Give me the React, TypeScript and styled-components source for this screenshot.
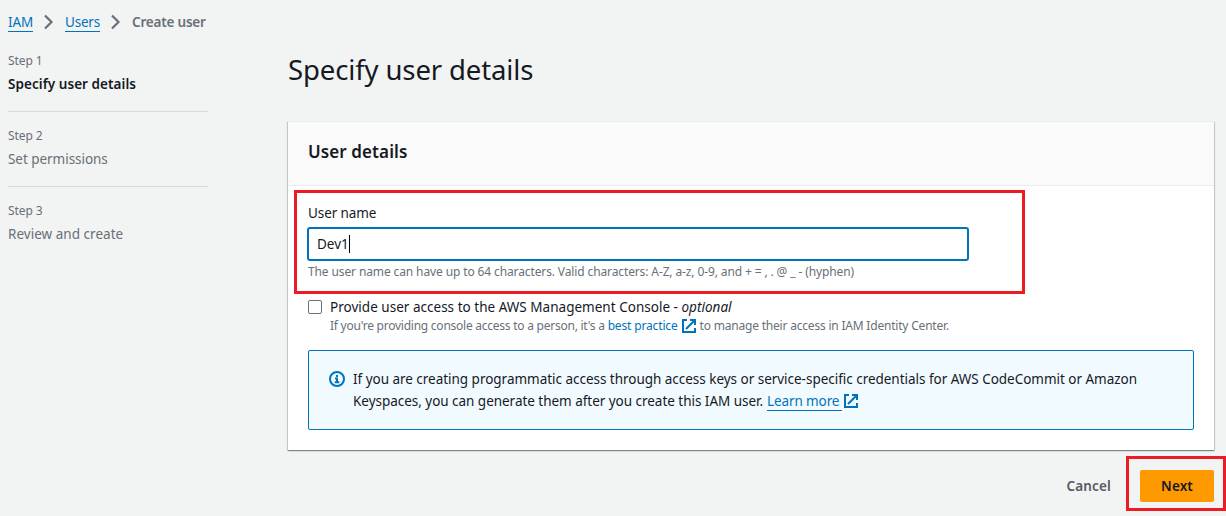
import React from "react";
import styled, { createGlobalStyle } from "styled-components";

const GlobalStyle = createGlobalStyle`
  * { box-sizing: border-box; }
  body {
    margin: 0;
    background: #f2f3f3;
    color: #16191f;
    font-family: "Noto Sans", "Open Sans", sans-serif;
    font-size: 14px;
    line-height: 22px;
  }
`;

const Page = styled.div`
  height: 516px;
  overflow: hidden;
  display: flex;
  flex-direction: column;
`;

const Text = styled.span<{ $track?: number }>`
  letter-spacing: ${(p) => p.$track ?? 0}px;
  white-space: nowrap;
`;

const Breadcrumbs = styled.nav`
  display: flex;
  align-items: center;
  height: 37px;
  padding: 7px 8px 0;
  font-size: 13.5px;
`;

const Crumb = styled.a<{ $width: number }>`
  display: block;
  width: ${(p) => p.$width}px;
  height: 20px;
  line-height: 20px;
  color: #0073bb;
  border-bottom: 1px solid #0073bb;
`;

const CurrentCrumb = styled.span`
  font-weight: 600;
  color: #687078;
  line-height: 20px;
`;

const Chevron = styled.svg`
  width: 10px;
  height: 16px;
  margin: 0 11px;
`;

const Body = styled.div`
  display: flex;
  flex: 1;
  padding: 0 12px 0 8px;
`;

const Steps = styled.ol`
  list-style: none;
  width: 200px;
  margin: 0 80px 0 0;
  padding: 0;
`;

const Step = styled.li`
  height: 75px;
  padding-top: 14px;
  border-bottom: 1px solid #d5dbdb;
  color: #687078;
  &:last-child { border-bottom: 0; }
`;

const StepLabel = styled.div`
  font-size: 12px;
  line-height: 20px;
`;

const StepTitle = styled.div<{ $active?: boolean }>`
  margin-top: 2px;
  font-size: 13.5px;
  color: ${(p) => (p.$active ? "#16191f" : "#687078")};
  font-weight: ${(p) => (p.$active ? 600 : 400)};
`;

const Main = styled.main`
  flex: 1;
  min-width: 0;
`;

const Title = styled.h1`
  margin: 0;
  height: 84px;
  padding-top: 15px;
  font-size: 27.5px;
  font-weight: 400;
  line-height: 36px;
`;

const Card = styled.section`
  height: 329px;
  background: #fff;
  border-top: 1px solid #eaeded;
  box-shadow: 0 1px 1px 0 rgba(0, 28, 36, 0.3), 1px 1px 1px 0 rgba(0, 28, 36, 0.15),
    -1px 1px 1px 0 rgba(0, 28, 36, 0.15);
`;

const CardHeader = styled.h2`
  margin: 0;
  height: 64px;
  padding: 19px 20px 0;
  font-size: 17px;
  font-weight: 600;
  line-height: 22px;
  background: #fafafa;
  border-bottom: 1px solid #eaeded;
`;

const CardBody = styled.div`
  padding: 16px 20px 0;
`;

const Field = styled.div`
  position: relative;
  height: 98px;
`;

const FieldLabel = styled.label`
  display: block;
  font-size: 13.5px;
`;

const Input = styled.div`
  display: flex;
  align-items: center;
  width: 662px;
  height: 34px;
  margin: 3px 0 0 -1px;
  padding: 0 8px;
  border: 2px solid #0073bb;
  border-radius: 3px;
  background: #fff;
  font-size: 13.5px;
`;

const Caret = styled.i`
  width: 1px;
  height: 18px;
  background: #000;
`;

const Hint = styled.div`
  padding-top: 1px;
  font-size: 12px;
  line-height: 20px;
  color: #687078;
  white-space: nowrap;
`;

const Highlight = styled.div<{ $inset: string }>`
  position: absolute;
  inset: ${(p) => p.$inset};
  border: 3px solid #ed1c24;
  pointer-events: none;
`;

const CheckRow = styled.div`
  display: flex;
  height: 50px;
`;

const Checkbox = styled.span`
  width: 14px;
  height: 14px;
  margin: 0 8px 0 0;
  border: 1px solid #687078;
  border-radius: 2px;
  background: #fff;
`;

const CheckText = styled.div`
  margin-top: -4px;
  font-size: 13.5px;
`;

const CheckHint = styled(Hint)`
  display: flex;
  margin-top: -3px;
  align-items: center;
`;

const HintLink = styled.a`
  display: flex;
  align-items: center;
  gap: 4px;
  margin: 0 4px 0 3px;
  color: #0073bb;
`;

const Alert = styled.div`
  display: flex;
  height: 80px;
  padding: 17px 20px;
  border: 1px solid #0073bb;
  border-radius: 2px;
  background: #f1faff;
  font-size: 13.5px;
`;

const AlertText = styled.div`
  margin-left: 8px;
`;

const AlertLine = styled.div`
  display: flex;
  height: 22px;
`;

const LearnMore = styled.a`
  width: 75px;
  height: 21px;
  margin: 0 2px 0 4px;
  border-bottom: 1px solid #0073bb;
  color: #0073bb;
`;

const Footer = styled.footer`
  display: flex;
  justify-content: flex-end;
  align-items: center;
  height: 32px;
  margin-top: 20px;
  font-size: 13.5px;
  font-weight: 600;
`;

const CancelButton = styled.a`
  color: #545b64;
  margin-right: 29px;
`;

const NextButton = styled.a`
  position: relative;
  display: flex;
  align-items: center;
  justify-content: center;
  width: 74px;
  height: 32px;
  border-radius: 2px;
  background: #ff9900;
`;

const Icon = styled.svg<{ $top?: number }>`
  display: block;
  flex: none;
  margin-top: ${(p) => p.$top ?? 0}px;
`;

const Separator = () => (
  <Chevron viewBox="0 0 10 16" fill="none" stroke="#687078" strokeWidth="2.2">
    <path d="M1 1.5 7.5 8 1 14.5" />
  </Chevron>
);

const ExternalIcon = ({ top }: { top?: number }) => (
  <Icon $top={top} width="14" height="14" viewBox="0 0 14 14" fill="none" stroke="#0073bb" strokeWidth="2">
    <path d="M5 1H1v12h12V9" />
    <path d="M8 1h5v5M13 1 4 10" />
  </Icon>
);

const InfoIcon = () => (
  <Icon $top={3} width="16" height="16" viewBox="0 0 16 16" fill="none" stroke="#0073bb" strokeWidth="2">
    <circle cx="8" cy="8" r="7" />
    <path d="M8 4v2M6 7.5h2V11M5.7 11.2h4.6" />
  </Icon>
);

const steps = [
  { label: "Step 1", title: "Specify user details", track: 0.06, active: true },
  { label: "Step 2", title: "Set permissions", track: -0.04 },
  { label: "Step 3", title: "Review and create", track: 0.03 },
];

export default function App() {
  return (
    <Page>
      <GlobalStyle />
      <Breadcrumbs>
        <Crumb $width={25}><Text $track={-0.1}>IAM</Text></Crumb>
        <Separator />
        <Crumb $width={35}><Text $track={-0.2}>Users</Text></Crumb>
        <Separator />
        <CurrentCrumb><Text $track={-0.2}>Create user</Text></CurrentCrumb>
      </Breadcrumbs>
      <Body>
        <Steps>
          {steps.map((s) => (
            <Step key={s.label}>
              <StepLabel><Text $track={-0.1}>{s.label}</Text></StepLabel>
              <StepTitle $active={s.active}><Text $track={s.track}>{s.title}</Text></StepTitle>
            </Step>
          ))}
        </Steps>
        <Main>
          <Title><Text $track={-0.12}>Specify user details</Text></Title>
          <Card>
            <CardHeader><Text $track={0.1}>User details</Text></CardHeader>
            <CardBody>
              <Field>
                <FieldLabel><Text $track={-0.1}>User name</Text></FieldLabel>
                <Input><Text>Dev1</Text><Caret /></Input>
                <Hint>
                  <Text $track={-0.12}>The user name can have up to 64 characters. Valid characters: A-Z, a-z, 0-9, and + = , . @ _ - (hyphen)</Text>
                </Hint>
                <Highlight $inset="-12px 169px 6px -14px" />
              </Field>
              <CheckRow>
                <Checkbox />
                <CheckText>
                  <Text $track={0.02}>Provide user access to the AWS Management Console - <em>optional</em></Text>
                  <CheckHint>
                    <Text $track={-0.245}>If you're providing console access to a person, it's a</Text>
                    <HintLink><Text $track={-0.15}>best practice</Text><ExternalIcon /></HintLink>
                    <Text $track={-0.2}>to manage their access in IAM Identity Center.</Text>
                  </CheckHint>
                </CheckText>
              </CheckRow>
              <Alert>
                <InfoIcon />
                <AlertText>
                  <AlertLine>
                    <Text $track={-0.025}>If you are creating programmatic access through access keys or service-specific credentials for AWS CodeCommit or Amazon</Text>
                  </AlertLine>
                  <AlertLine>
                    <Text $track={-0.03}>Keyspaces, you can generate them after you create this IAM user.</Text>
                    <LearnMore><Text $track={-0.1}>Learn more</Text></LearnMore>
                    <ExternalIcon top={4} />
                  </AlertLine>
                </AlertText>
              </Alert>
            </CardBody>
          </Card>
          <Footer>
            <CancelButton><Text $track={0.15}>Cancel</Text></CancelButton>
            <NextButton><Text $track={0.1}>Next</Text><Highlight $inset="-14px -12px -9px -14px" /></NextButton>
          </Footer>
        </Main>
      </Body>
    </Page>
  );
}
